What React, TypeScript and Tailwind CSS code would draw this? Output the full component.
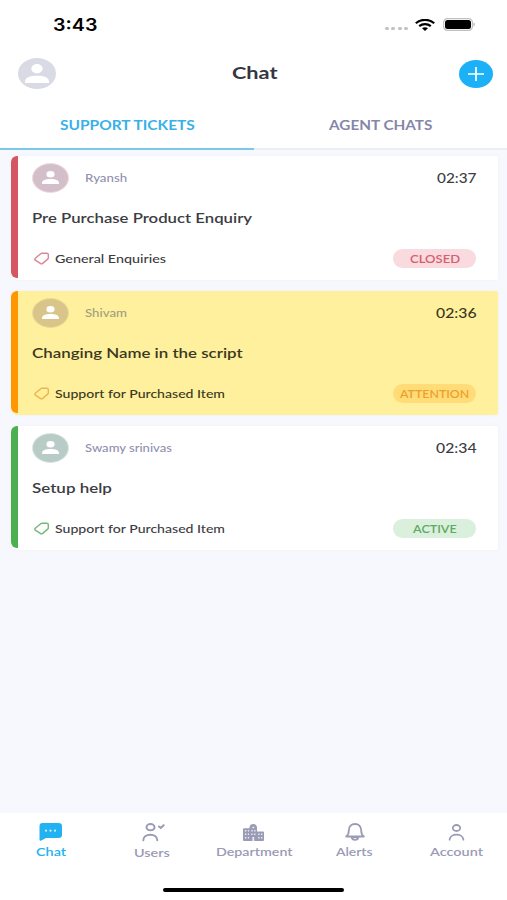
import { useLayoutEffect, useRef } from "react";
import type { ReactNode } from "react";

/** A single line of text stretched to the width of its box. */
function Fit({ className, children }: { className: string; children: string }) {
  const box = useRef<HTMLSpanElement>(null);
  const text = useRef<HTMLSpanElement>(null);
  useLayoutEffect(() => {
    const fit = () => {
      if (!box.current || !text.current) return;
      text.current.style.transform = `scaleX(${box.current.clientWidth / text.current.offsetWidth})`;
    };
    fit();
    document.fonts.ready.then(fit);
  }, []);
  return (
    <span ref={box} className={`block shrink-0 whitespace-nowrap ${className}`}>
      <span ref={text} className="inline-block origin-left">
        {children}
      </span>
    </span>
  );
}

function Person({ className }: { className: string }) {
  return (
    <svg viewBox="0 0 16 16" preserveAspectRatio="none" className={className} fill="currentColor">
      <ellipse cx="8" cy="4" rx="3.800" ry="4" />
      <path d="M0 16v-1.500C0 11.300 3.500 9.800 8 9.800s8 1.500 8 4.700V16z" />
    </svg>
  );
}

function StatusBar() {
  return (
    <div className="flex h-[49px] items-center pl-[53px] pr-[31px]">
      <Fit className="w-[44px] font-['Inter',sans-serif] text-[17px] leading-5 font-semibold text-black">3:43</Fit>
      <div className="ml-auto flex items-center">
        <div className="mt-2 mr-[7px] flex gap-[2.500px]">
          {[0, 1, 2, 3].map((i) => (
            <i key={i} className="h-[3px] w-[4px] rounded-full bg-[#c2c2c4]" />
          ))}
        </div>
        <svg viewBox="0 0 20 12" className="mr-[8px] h-3 w-5" preserveAspectRatio="none" fill="none" stroke="#000" strokeWidth="2.200">
          <path d="M.8 4.300C6-.3 14-.3 19.200 4.300" />
          <path d="M4.200 7.200c3.300-2.800 8.300-2.800 11.600 0" />
          <path d="M7 9.200c1.800-1.400 4.200-1.400 6 0L10 12z" fill="#000" stroke="none" />
        </svg>
        <svg viewBox="0 0 33 13" className="h-[13px] w-[33px]">
          <rect x=".6" y=".6" width="28.800" height="11.800" rx="3.800" fill="#fff" stroke="#c0c0c0" strokeWidth="1.200" />
          <rect x="2" y="2" width="26" height="9" rx="2.500" fill="#000" />
          <path d="M30.500 4.500c1.700.4 1.700 3.600 0 4z" fill="#b5b5b5" />
        </svg>
      </div>
    </div>
  );
}

type Ticket = {
  name: string;
  nameW: string;
  time: string;
  timeW: string;
  title: string;
  titleW: string;
  category: string;
  categoryW: string;
  status: string;
  statusW: string;
  card: string;
  bar: string;
  avatar: string;
  tag: string;
  pill: string;
  nameColor: string;
  ink: string;
};

const tickets: Ticket[] = [
  {
    name: "Ryansh", nameW: "w-[42px]", time: "02:37", timeW: "w-[39px]",
    title: "Pre Purchase Product Enquiry", titleW: "w-[220px]",
    category: "General Enquiries", categoryW: "w-[111px]",
    status: "CLOSED", statusW: "w-[50px]",
    card: "bg-white", bar: "bg-[#d65562]", avatar: "bg-[#d3bfca] border-[#f3d9df]",
    tag: "text-[#d98793]", pill: "bg-[#f8dadf] text-[#d65f70]",
    nameColor: "text-[#8f91ae]", ink: "text-[#3c3c42]",
  },
  {
    name: "Shivam", nameW: "w-[42px]", time: "02:36", timeW: "w-[40px]",
    title: "Changing Name in the script", titleW: "w-[211px]",
    category: "Support for Purchased Item", categoryW: "w-[170px]",
    status: "ATTENTION", statusW: "w-[69px]",
    card: "bg-[#fef09c]", bar: "bg-[#ff9800]", avatar: "bg-[#d9c58a] border-[#eddb91]",
    tag: "text-[#f0b54a]", pill: "bg-[#ffdc78] text-[#eea02b]",
    nameColor: "text-[#a39d80]", ink: "text-[#3b3722]",
  },
  {
    name: "Swamy srinivas", nameW: "w-[87px]", time: "02:34", timeW: "w-[40px]",
    title: "Setup help", titleW: "w-[80px]",
    category: "Support for Purchased Item", categoryW: "w-[170px]",
    status: "ACTIVE", statusW: "w-[44px]",
    card: "bg-white", bar: "bg-[#4caf50]", avatar: "bg-[#b9cbc7] border-[#d7eadb]",
    tag: "text-[#74b87b]", pill: "bg-[#dbefdd] text-[#5cab63]",
    nameColor: "text-[#8f91ae]", ink: "text-[#3c3c42]",
  },
];

function TicketCard({ t }: { t: Ticket }) {
  return (
    <article className={`flex h-[124px] rounded-l-[7px] rounded-r-[2px] shadow-[0_0_4px_rgba(130,140,180,0.06)] ${t.card}`}>
      <div className={`h-[122px] w-[6.500px] shrink-0 rounded-l-[6px] ${t.bar}`} />
      <div className="flex flex-1 flex-col pr-[22px] pl-[14px]">
        <div className="flex h-[43px] items-center">
          <div className={`flex h-[30px] w-[37px] items-center justify-center rounded-[50%] border ${t.avatar}`}>
            <Person className="h-[13px] w-[17px] text-white" />
          </div>
          <Fit className={`ml-4 text-[12px] leading-4 font-medium ${t.nameW} ${t.nameColor}`}>{t.name}</Fit>
          <Fit className={`ml-auto text-[13px] leading-4 font-medium ${t.timeW} ${t.ink}`}>{t.time}</Fit>
        </div>
        <div className="flex h-[37px] items-center">
          <Fit className={`text-[14px] leading-4 font-semibold ${t.titleW} ${t.ink}`}>{t.title}</Fit>
        </div>
        <div className="mt-[11px] flex h-[23px] items-center">
          <svg viewBox="0 0 16 13" className={`mr-[5.500px] ml-[2px] h-[13px] w-4 ${t.tag}`} fill="none" stroke="currentColor" strokeWidth="1.400" strokeLinejoin="round">
            <path d="M1.300 6.300 6.700 1.700q.6-.5 1.500-.5h4.600q1.500 0 1.500 1.200v3.500q0 .7-.6 1.200L8.700 11.400q-1.200 1-2.400 0L1.300 8.200q-1-.9 0-1.900z" />
          </svg>
          <Fit className={`text-[12px] leading-4 font-medium ${t.categoryW} ${t.ink}`}>{t.category}</Fit>
          <div className={`ml-auto flex h-[19px] w-[83px] items-center justify-center rounded-[10px] ${t.pill}`}>
            <Fit className={`text-[12px] leading-4 font-semibold ${t.statusW}`}>{t.status}</Fit>
          </div>
        </div>
      </div>
    </article>
  );
}

function NavItem({ icon, label, width, color }: { icon: ReactNode; label: string; width: string; color: string }) {
  return (
    <div className={`flex flex-1 flex-col items-center ${color}`}>
      <div className="flex h-[20px] items-center justify-center">{icon}</div>
      <Fit className={`text-[12px] leading-4 font-semibold ${width}`}>{label}</Fit>
    </div>
  );
}

const ChatIcon = (
  <svg viewBox="0 0 23 18" className="h-[18px] w-[23px]" fill="currentColor">
    <path d="M3.500 0h16Q23 0 23 3v9q0 3-3.500 3H7L1.800 17.700Q.5 18 .5 16.500V3Q.5 0 3.500 0z" />
    <g fill="#c5efff">
      <circle cx="7" cy="7.700" r="1.100" />
      <circle cx="11.500" cy="7.700" r="1.100" />
      <circle cx="16" cy="7.700" r="1.100" />
    </g>
  </svg>
);

const UsersIcon = (
  <svg viewBox="0 0 24 19" className="ml-px h-[19px] w-[24px]" fill="none" stroke="currentColor" strokeWidth="2" strokeLinecap="round">
    <ellipse cx="9.500" cy="4.200" rx="4" ry="3.100" />
    <path d="M2.300 17.300c0-7.400 14-7.400 14 0" />
    <path d="m18 3.500 1.800 1.500 2.900-2.800" />
  </svg>
);

const DepartmentIcon = (
  <svg viewBox="0 0 21 17" className="h-[17px] w-[21px]" fill="currentColor">
    <path d="M1 4.200h5.500V3Q7 .2 10.300 0q3.200.2 3.700 3v4.500h6q1 0 1 1V16q0 1-1 1H1q-1 0-1-1V5.200q0-1 1-1z" />
    <g fill="#e9e9f3">
      <path d="M1.900 6h1.500v1.600H1.900zM1.900 9.500h1.500v1.600H1.900zM1.900 13h1.500v1.600H1.900zM4.900 6h1.200v1.600H4.900zM4.900 9.500h1.200v1.600H4.900zM4.900 13h1.200v1.600H4.900z" />
      <path d="M9.300 2.700h2v1.600h-2zM8.300 6h1.400v1.600H8.300zM11.100 6h1.400v1.600h-1.400zM8.300 9.500h1.400v1.600H8.300zM11.100 9.500h1.400v1.600h-1.400zM9.400 13h1.800v4H9.400z" />
      <path d="M15.200 9.500h1.400v1.600h-1.400zM18 9.500h1.400v1.600H18zM15.200 13h1.400v1.600h-1.400zM18 13h1.400v1.600H18z" />
    </g>
  </svg>
);

const BellIcon = (
  <svg viewBox="0 0 20 18" className="ml-px h-[18px] w-5" fill="none" stroke="currentColor" strokeWidth="1.800" strokeLinejoin="round" strokeLinecap="round">
    <path d="M1.200 13.500c2.400-1.700 2.600-3 2.600-6C3.800 3.400 6.400 1 10 1s6.200 2.400 6.200 6.500c0 3 .2 4.300 2.600 6z" />
    <path d="M6.600 14c.6 3.700 6.200 3.700 6.800 0z" />
  </svg>
);

const AccountIcon = (
  <svg viewBox="0 0 17 17" className="h-[17px] w-[17px]" fill="none" stroke="currentColor" strokeWidth="1.800" strokeLinecap="round">
    <ellipse cx="8.500" cy="4" rx="3.700" ry="3" />
    <path d="M1.600 15.700c.4-6.800 13.400-6.800 13.800 0" />
  </svg>
);

export default function App() {
  return (
    <div className="flex h-[900px] w-[507px] flex-col overflow-hidden bg-[#f7f8fd] font-['Lato',sans-serif]">
      <header className="bg-white">
        <StatusBar />
        <div className="flex h-[49px] items-center justify-between pr-[14px] pl-[18px]">
          <div className="flex h-[31px] w-[38px] items-center justify-center rounded-[50%] bg-[#d9dae3]">
            <Person className="h-[19px] w-[24px] text-white" />
          </div>
          <Fit className="mr-[6px] mb-[2px] w-[46px] text-[17px] leading-5 font-bold text-[#36363f]">Chat</Fit>
          <div className="flex h-[28px] w-[34px] items-center justify-center rounded-[50%] bg-[#1cb0f6]">
            <svg viewBox="0 0 16 14" className="h-[14px] w-4" stroke="#fff" strokeWidth="1.700">
              <path d="M8 0v14M0 7h16" />
            </svg>
          </div>
        </div>
        <div className="flex h-[52px]">
          <div className="flex flex-1 justify-center border-b-2 border-[#7cc8e8] pt-[20px] pl-[2px]">
            <Fit className="w-[135px] text-[12.500px] leading-4 font-bold text-[#38b0e8]">SUPPORT TICKETS</Fit>
          </div>
          <div className="flex flex-1 justify-center border-b-2 border-[#edeef3] pt-[20px] pl-[2px]">
            <Fit className="w-[104px] text-[12.500px] leading-4 font-bold text-[#8587a8]">AGENT CHATS</Fit>
          </div>
        </div>
      </header>
      <main className="flex flex-1 flex-col gap-[11px] pt-[6px] pr-[9px] pl-[11px]">
        {tickets.map((t) => (
          <TicketCard key={t.name} t={t} />
        ))}
      </main>
      <nav className="flex h-[87px] flex-col bg-white">
        <div className="flex pt-[9px]">
          <NavItem icon={ChatIcon} label="Chat" width="w-[30px] mt-[2px]" color="text-[#22b2f2]" />
          <NavItem icon={UsersIcon} label="Users" width="w-[36px] mt-[3px]" color="text-[#9a9bb5]" />
          <NavItem icon={DepartmentIcon} label="Department" width="w-[76px] mt-[2px]" color="text-[#9a9bb5]" />
          <NavItem icon={BellIcon} label="Alerts" width="w-[37px] mt-[2px]" color="text-[#9a9bb5]" />
          <NavItem icon={AccountIcon} label="Account" width="w-[53px] mt-[2px]" color="text-[#9a9bb5]" />
        </div>
        <div className="mx-auto mt-auto mb-[8px] h-[4.500px] w-[181px] rounded-full bg-black" />
      </nav>
    </div>
  );
}
